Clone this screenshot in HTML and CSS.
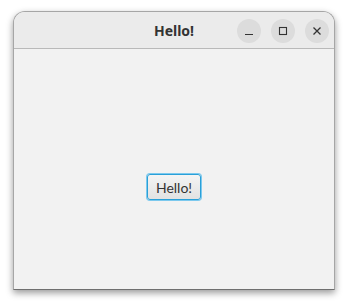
FILE: index.html
```html
<!DOCTYPE html>
<html lang="en">
<head>
    <meta charset="UTF-8">
    <title>Hello!</title>
    <link rel="stylesheet" href="styles.css">
</head>
<body>
    <div class="window">
        <div class="titlebar">
            <div class="title">Hello!</div>
            <div class="controls">
                <span class="ctl">
                    <svg width="10" height="10" viewBox="0 0 10 10"><path d="M1 8.5h8" stroke="#333" stroke-width="1.2"/></svg>
                </span>
                <span class="ctl">
                    <svg width="10" height="10" viewBox="0 0 10 10"><rect x="1.5" y="1.5" width="7" height="7" fill="none" stroke="#333" stroke-width="1.1"/></svg>
                </span>
                <span class="ctl">
                    <svg width="10" height="10" viewBox="0 0 10 10"><path d="M1.5 1.5l7 7M8.5 1.5l-7 7" stroke="#333" stroke-width="1.3"/></svg>
                </span>
            </div>
        </div>
        <div class="content">
            <button class="button">Hello!</button>
        </div>
    </div>
</body>
</html>
```

FILE: styles.css
```css
body {
    margin: 0;
    padding: 11px 13px;
    background: #ffffff;
    font-family: "Noto Sans", "DejaVu Sans", sans-serif;
}
.window {
    width: 322px;
    height: 279px;
    box-sizing: border-box;
    border: 1px solid #a6a6a6;
    border-bottom-color: #6f6f6f;
    border-radius: 12px 12px 0 0;
    background: #f2f2f2;
    box-shadow: 0 3px 7px rgba(0, 0, 0, 0.4);
    overflow: hidden;
    display: flex;
    flex-direction: column;
}
.titlebar {
    position: relative;
    height: 36px;
    background: #ebebeb;
    border-bottom: 1px solid #b9b9b9;
    display: flex;
    align-items: center;
    justify-content: center;
}
.title {
    font-weight: 700;
    font-size: 14px;
    color: #333;
}
.controls {
    position: absolute;
    right: 5px;
    top: 7px;
    display: flex;
    gap: 10px;
}
.ctl {
    width: 24px;
    height: 24px;
    border-radius: 50%;
    background: #dcdcdc;
    display: flex;
    align-items: center;
    justify-content: center;
}
.content {
    flex: 1;
    display: flex;
    justify-content: center;
    padding-top: 125px;
    align-items: flex-start;
}
.button {
    width: 54px;
    height: 26px;
    font-family: "Lato", "Noto Sans", sans-serif;
    font-size: 14px;
    color: #333;
    background: linear-gradient(#f4f4f4, #e2e2e2);
    border: 1px solid #2aa0d8;
    border-radius: 3px;
    box-shadow: 0 0 0 1px #7cc9ee;
    padding: 0;
}
```
